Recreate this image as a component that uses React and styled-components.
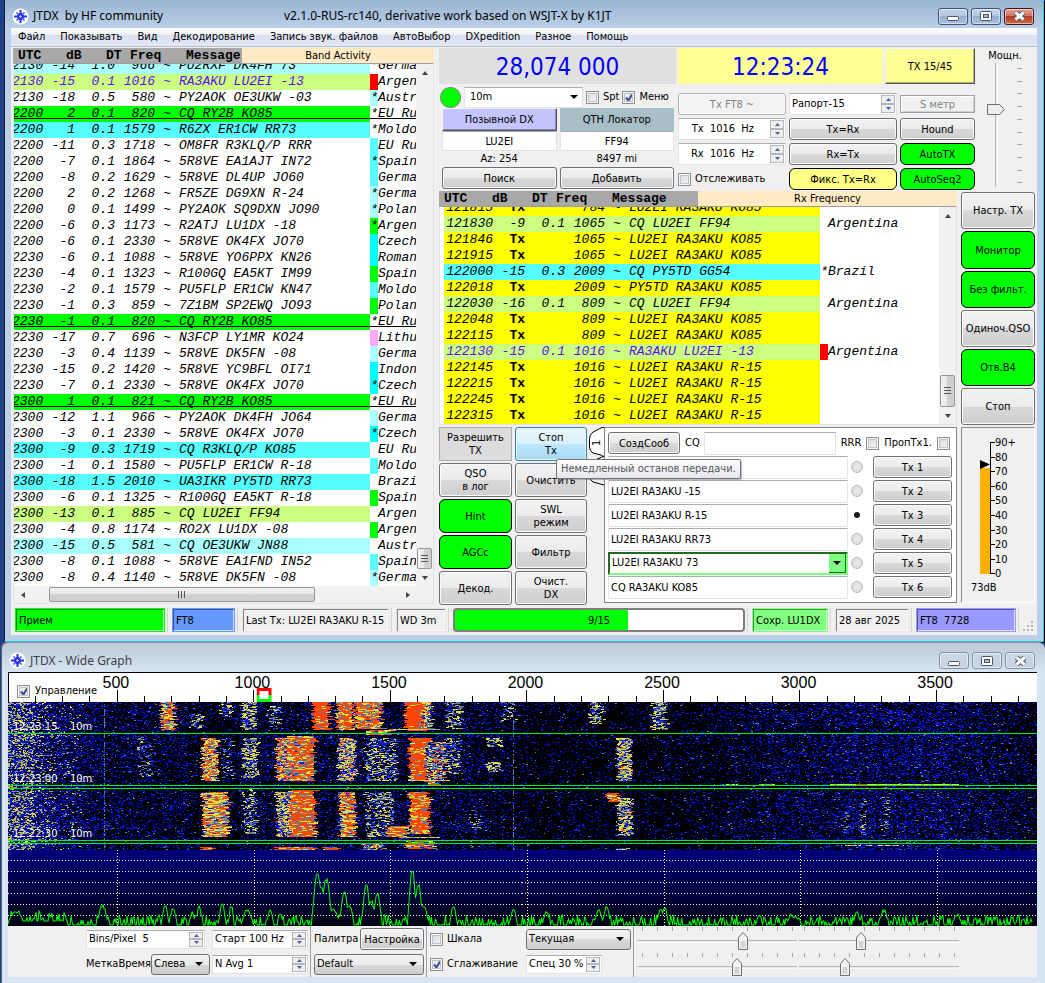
import React from 'react'
import styled, { createGlobalStyle, css } from 'styled-components'

const ui = '"DejaVu Sans Condensed", "Noto Sans", sans-serif';
const mono = '"Liberation Mono", monospace';

const GlobalStyle = createGlobalStyle`
    * { box-sizing:border-box; }
    body {
        margin:0;
        background:#1f3f86;
        font-family:${ui};
        font-size:11px;
        line-height:14px;
        color:#000;
    }
    button, input, select {
        font:inherit;
        color:inherit;
        margin:0;
    }
`;

const svgUrl = (body, w, h) =>
    `url("data:image/svg+xml,${encodeURIComponent(`<svg xmlns='http://www.w3.org/2000/svg' width='${w}' height='${h}'>${body}</svg>`)}")`;

const checkMark = svgUrl("<path d='M2 4.5 L4.5 7.5 L8 1.5' fill='none' stroke='#3b4f8f' stroke-width='2'/>", 10, 9);
const dropArrow = svgUrl("<path d='M0 0h8l-4 4z' fill='#000'/>", 8, 4);
const thumbUp = svgUrl("<path d='M.5 5.5L5 .5L9.5 5.5V17.5H.5z' fill='#f4f4f4' stroke='#6e6e6e'/><path d='M2.5 9h5v7h-5z' fill='#d4d4d4'/>", 10, 18);
const thumbRight = svgUrl("<path d='M.5 .5H12.5L17.5 5.5L12.5 10.5H.5z' fill='#ececec' stroke='#6e6e6e'/>", 18, 11);

/* ---------- windows ---------- */

const Desktop = styled.div`
    background:#1f3f86;
    min-height:100vh;
`;

const MainWindow = styled.section`
    margin-left:4px;
    padding:0 6px 6px 6px;
    border-left:1px solid #111a2c;
    border-right:1px solid #2cc4e8;
    border-bottom:1px solid #2cc4e8;
    background:linear-gradient(#9ab4d1, #bbd0e8 28px, #bbd0e8);
    box-shadow:1px 1px 0 #000;
    margin-right:1px;
`;

const GraphWindow = styled.section`
    margin:1px 0 0 1px;
    padding:0 8px 6px 6px;
    border-left:1px solid #5b6672;
    border-radius:6px 6px 0 0;
    background:linear-gradient(#bccad8, #d7e4f2 29px, #d7e4f2);
    box-shadow:0 -1px 0 #8b949d;
`;

const TitleBar = styled.header`
    display:flex;
    align-items:center;
    height:${p => p.$tall ? '29px' : '28px'};
    padding:${p => p.$tall ? '6px 2px 0 1px' : '4px 3px 0 1px'};
    font-family:"Noto Sans", sans-serif;
    font-size:12px;
    color:${p => p.$dim ? '#3c3f44' : '#000'};
    white-space:pre;
`;

const AppTitle = styled.h1`
    margin:0 0 0 4px;
    font-size:12px;
    font-weight:normal;
    width:${p => p.$wide ? '251px' : 'auto'};
`;

const CaptionButtons = styled.div`
    display:flex;
    gap:3px;
    margin-left:auto;
`;

const CaptionButton = styled.button`
    display:flex;
    align-items:center;
    justify-content:center;
    width:30px;
    height:17px;
    padding:0;
    border:1px solid ${p => p.$close ? '#43161c' : p.$dim ? '#8191a8' : '#3f5474'};
    border-radius:3px;
    box-shadow:inset 0 0 0 1px rgba(255,255,255,0.5);
    background:${p => p.$close
        ? 'linear-gradient(#e3a597, #cf7260 50%, #b23a22 50%, #cf6d50)'
        : p.$dim
            ? 'linear-gradient(#cbd8e6, #c3d1e1)'
            : 'linear-gradient(#c5d5e8, #b0c5de 50%, #94afd0 50%, #a9c0dd)'};
`;

const MenuBar = styled.nav`
    display:flex;
    align-items:center;
    gap:15px;
    height:19px;
    padding:0 7px;
    border-bottom:1px solid #b8bccb;
    background:linear-gradient(#fff, #eef1f9 7px, #d9e0f1 7px, #e3e8f6);
`;

const MenuItem = styled.a`
    color:#000;
    text-decoration:none;
    white-space:nowrap;
`;

const Client = styled.main`
    background:#f0f0f0;
    padding:1px 2px 0 2px;
`;

const Columns = styled.div`
    display:flex;
    gap:5px;
`;

/* ---------- controls ---------- */

const Button = styled.button`
    display:flex;
    align-items:center;
    justify-content:center;
    min-width:0;
    height:${p => p.$h || 22}px;
    width:${p => p.$w ? p.$w + 'px' : '100%'};
    flex:none;
    padding:0;
    line-height:13px;
    white-space:pre-line;
    border:1px solid #707070;
    border-radius:3px;
    box-shadow:inset 0 0 0 1px #fafafa;
    background:linear-gradient(#f2f2f2, #ebebeb 50%, #d9d9d9 50%, #cecece);
    ${p => p.$tone && css`
        border:1px solid #000;
        border-radius:6px;
        box-shadow:none;
        background:${p.$tone};
    `}
    ${p => p.$hot && css`
        border-color:#3c7fb1;
        box-shadow:inset 0 0 0 1px #e8f6fd;
        background:linear-gradient(#eaf6fd, #d9f0fc 50%, #bee6fd 50%, #a7d9f5);
    `}
    ${p => p.$flat && css`
        border:1px solid #adadad;
        border-radius:0;
        box-shadow:none;
        background:#dcdcdc;
    `}
    ${p => p.$bevel && css`
        border:1px solid;
        border-color:#f4f4ff #55555f #55555f #f4f4ff;
        border-radius:0;
        box-shadow:inset -1px -1px 0 rgba(0,0,0,0.3);
        background:${p.$bevel};
    `}
    ${p => p.$plain && css`
        border:0;
        border-radius:0;
        box-shadow:none;
        background:${p.$plain};
    `}
    &:disabled {
        color:#838383;
        border-color:#b0b4b4;
        background:#f2f2f2;
    }
`;

const fieldFrame = css`
    border:1px solid #e2e3ea;
    border-top:1px solid #abadb3;
    background-color:#fff;
`;

const TextField = styled.input`
    ${fieldFrame}
    width:${p => p.$w ? p.$w + 'px' : '100%'};
    min-width:0;
    height:${p => p.$h || 19}px;
    padding:0 2px;
    text-align:${p => p.$center ? 'center' : 'left'};
`;

const SpinFrame = styled.div`
    ${fieldFrame}
    display:flex;
    width:${p => p.$w ? p.$w + 'px' : '100%'};
    height:${p => p.$h || 22}px;
    padding:1px;
    input {
        flex:1;
        min-width:0;
        border:0;
        padding:0 1px;
        background:none;
        text-align:${p => p.$right ? 'right' : 'left'};
        padding-right:${p => p.$right ? '16px' : '1px'};
        white-space:pre;
    }
`;

const SpinButtons = styled.div`
    display:flex;
    flex-direction:column;
    width:14px;
    flex:none;
`;

const SpinButton = styled.button`
    flex:1;
    display:flex;
    align-items:center;
    justify-content:center;
    min-height:0;
    padding:0;
    border:1px solid #b4b6bb;
    background:#efefef;
`;

const Choice = styled.label`
    display:flex;
    align-items:center;
    gap:${p => p.$gap || 4}px;
    white-space:nowrap;
`;

const CheckBox = styled.input.attrs({ type: 'checkbox' })`
    appearance:none;
    flex:none;
    width:13px;
    height:13px;
    border:1px solid #8e8f8f;
    box-shadow:inset 0 0 0 1px #f4f4f4, inset 0 0 0 2px #c0c4c8;
    background:linear-gradient(135deg, #d5d8db, #f6f6f6);
    &:checked {
        background:${checkMark} center no-repeat, #e9ebee;
    }
`;

const Radio = styled.input.attrs({ type: 'radio' })`
    appearance:none;
    flex:none;
    width:12px;
    height:12px;
    border:1px solid #bcbcbc;
    border-radius:50%;
    background:radial-gradient(#ececec, #d8d8d8);
    &:checked {
        border:3px solid transparent;
        background:#1c1c1c padding-box;
    }
`;

const Select = styled.select`
    appearance:none;
    width:${p => p.$w ? p.$w + 'px' : '100%'};
    min-width:0;
    height:${p => p.$h || 21}px;
    padding:0 2px;
    border:1px solid #707070;
    border-radius:3px;
    background:${dropArrow} right 6px center no-repeat,
        linear-gradient(#f2f2f2, #ebebeb 50%, #d9d9d9 50%, #cecece);
    ${p => p.$plain && css`
        ${fieldFrame}
        border-radius:0;
        padding:0 5px;
        background:${dropArrow} right 4px center no-repeat, #fff;
    `}
    ${p => p.$green && css`
        border:2px solid #7fff7f;
        border-top-color:#226b22;
        border-left-color:#226b22;
        border-radius:0;
        background:${dropArrow} right 5px center no-repeat,
            linear-gradient(#226b22, #226b22) right top / 1px 100% no-repeat,
            linear-gradient(#226b22, #226b22) right bottom / 17px 1px no-repeat,
            linear-gradient(#7fff7f, #7fff7f) right center / 17px 100% no-repeat, #fff;
    `}
`;

const RangeAcross = styled.input.attrs({ type: 'range' })`
    appearance:none;
    display:block;
    width:100%;
    height:18px;
    background:linear-gradient(#b4b4b4, #b4b4b4 1px, #e7eaea 1px, #fff) left 8px / 100% 3px no-repeat;
    &::-webkit-slider-thumb {
        appearance:none;
        width:10px;
        height:18px;
        background:${thumbUp} no-repeat;
    }
`;

const RangeDown = styled.input.attrs({ type: 'range' })`
    appearance:none;
    writing-mode:vertical-lr;
    direction:rtl;
    width:18px;
    height:124px;
    background:linear-gradient(90deg, #b4b4b4, #b4b4b4 1px, #e7eaea 1px, #fff) 8px top / 3px 100% no-repeat;
    &::-webkit-slider-thumb {
        appearance:none;
        width:18px;
        height:11px;
        background:${thumbRight} no-repeat;
    }
`;

function SpinBox({ label, value, w, h, right }) {
    return (
        <SpinFrame $w={w} $h={h} $right={right}>
            <input aria-label={label} defaultValue={value} />
            <SpinButtons>
                <SpinButton aria-label={label + ' +'}>
                    <svg width="5" height="3"><path d="M0 3h5L2.5 0z" fill="#4a5f9c" /></svg>
                </SpinButton>
                <SpinButton aria-label={label + ' -'}>
                    <svg width="5" height="3"><path d="M0 0h5L2.5 3z" fill="#4a5f9c" /></svg>
                </SpinButton>
            </SpinButtons>
        </SpinFrame>
    )
}

/* ---------- decode lists ---------- */

const ListHeader = styled.div`
    display:flex;
    height:15px;
    background:#ffebc3;
`;

const ListCaption = styled.div`
    display:grid;
    grid-template-columns:48px 40px 24px 56px auto;
    align-content:center;
    width:${p => p.$w}px;
    padding-left:5px;
    background:#a8a8a8;
    font-family:${mono};
    font-size:13px;
    font-weight:bold;
    line-height:15px;
`;

const ListTitle = styled.div`
    flex:1;
    text-align:center;
    line-height:16px;
`;

const ListFrame = styled.div`
    display:grid;
    grid-template-columns:minmax(0, 1fr) 17px;
    border:1px solid #e0e3e8;
    border-top-color:#9a9da4;
    background:#fff;
`;

const Viewport = styled.div`
    display:flex;
    flex-direction:column;
    justify-content:flex-end;
    overflow:hidden;
    height:${p => p.$h}px;
    padding-left:${p => p.$pad || 0}px;
`;

const DecodeTable = styled.table`
    flex:none;
    table-layout:fixed;
    width:100%;
    min-width:${p => p.$cut ? 'calc(100% + 2px)' : '100%'};
    margin-left:${p => p.$cut ? '-2px' : '0'};
    border-spacing:0;
    font-family:${mono};
    font-size:13px;
    font-style:italic;
    line-height:16px;
`;

const DecodeRow = styled.tr`
    position:relative;
    height:16px;
    color:${p => p.$mine ? '#5a0ef0' : '#000'};
    ${p => p.$line && css`
        &::after {
            content:'';
            position:absolute;
            left:0;
            right:0;
            bottom:3px;
            height:1px;
            background:#000;
        }
    `}
`;

const Cell = styled.td`
    padding:0;
    text-align:${p => p.$align || 'right'};
    font-style:${p => p.$upright ? 'normal' : 'italic'};
    font-weight:${p => p.$upright ? 'bold' : 'normal'};
    background:${p => p.$bg || 'transparent'};
    white-space:nowrap;
    color:${p => p.$black ? '#000' : 'inherit'};
`;

const VScroll = styled.div`
    display:flex;
    flex-direction:column;
    align-items:center;
    background:#f1f1f1;
`;

const HScroll = styled.div`
    display:flex;
    align-items:center;
    height:17px;
    background:#f1f1f1;
`;

const ScrollCorner = styled.div`
    background:#f1f1f1;
`;

const ScrollArrow = styled.button`
    display:flex;
    align-items:center;
    justify-content:center;
    flex:none;
    width:17px;
    height:17px;
    padding:0;
    border:0;
    background:none;
`;

const ScrollGap = styled.div`
    flex:${p => p.$n};
`;

const ScrollThumb = styled.div`
    display:flex;
    align-items:center;
    justify-content:center;
    flex:none;
    width:${p => p.$across ? '266px' : '15px'};
    height:${p => p.$across ? '15px' : (p.$h || 21) + 'px'};
    border:1px solid #979797;
    border-radius:2px;
    background:linear-gradient(${p => p.$across ? '180deg' : '90deg'}, #f3f3f3, #e6e6e6 50%, #d2d2d2 50%, #cdcdcd);
`;

const C1 = '#aaffff', C2 = '#55ffff', C3 = '#00ffff', GR = '#00ff00', LM = '#ccff7f', YE = '#ffff00';

// utc, dB, dt, freq, message, row colour, flag colour, flag, country, style
const bandRows = [
    ['2130', '-14', '1.0', '966', 'PU2RXF DK4FH 73', C1, '', '*', 'Germa'],
    ['2130', '-15', '0.1', '1016', 'RA3AKU LU2EI -13', LM, '#ff0000', '', 'Argen', 'mine'],
    ['2130', '-18', '0.5', '580', 'PY2AOK OE3UKW -03', '', C1, '*', 'Austr'],
    ['2200', '2', '0.1', '820', 'CQ RY2B KO85', GR, '', '*', 'EU Ru', 'line'],
    ['2200', '1', '0.1', '1579', 'R6ZX ER1CW RR73', C2, '', '*', 'Moldo'],
    ['2200', '-11', '0.3', '1718', 'OM8FR R3KLQ/P RRR', '', C2, '', 'EU Ru'],
    ['2200', '-7', '0.1', '1864', '5R8VE EA1AJT IN72', '', C2, '*', 'Spain'],
    ['2200', '-8', '0.2', '1629', '5R8VE DL4UP JO60', '', C2, '', 'Germa'],
    ['2200', '2', '0.2', '1268', 'FR5ZE DG9XN R-24', '', C1, '*', 'Germa'],
    ['2200', '0', '0.1', '1499', 'PY2AOK SQ9DXN JO90', '', C1, '*', 'Polan'],
    ['2200', '-6', '0.3', '1173', 'R2ATJ LU1DX -18', '', GR, '*', 'Argen'],
    ['2200', '-6', '0.1', '2330', '5R8VE OK4FX JO70', '', C3, '', 'Czech'],
    ['2230', '-6', '0.1', '1088', '5R8VE YO6PPX KN26', '', C3, '', 'Roman'],
    ['2230', '-4', '0.1', '1323', 'R100GQ EA5KT IM99', '', GR, '', 'Spain'],
    ['2230', '-2', '0.1', '1579', 'PU5FLP ER1CW KN47', '', C2, '', 'Moldo'],
    ['2230', '-1', '0.3', '859', '7Z1BM SP2EWQ JO93', '', GR, '', 'Polan'],
    ['2230', '-1', '0.1', '820', 'CQ RY2B KO85', GR, '', '*', 'EU Ru', 'line'],
    ['2230', '-17', '0.7', '696', 'N3FCP LY1MR KO24', '', '#ffaaff', '', 'Lithu'],
    ['2230', '-3', '0.4', '1139', '5R8VE DK5FN -08', '', C1, '', 'Germa'],
    ['2230', '-15', '0.2', '1420', '5R8VE YC9BFL OI71', '', C3, '', 'Indon'],
    ['2230', '-7', '0.1', '2330', '5R8VE OK4FX JO70', '', C3, '*', 'Czech'],
    ['2300', '1', '0.1', '821', 'CQ RY2B KO85', GR, '', '*', 'EU Ru', 'line'],
    ['2300', '-12', '1.1', '966', 'PY2AOK DK4FH JO64', '', C1, '', 'Germa'],
    ['2300', '-3', '0.1', '2330', '5R8VE OK4FX JO70', '', C3, '*', 'Czech'],
    ['2300', '-9', '0.3', '1719', 'CQ R3KLQ/P KO85', C2, '', '', 'EU Ru'],
    ['2300', '-1', '0.1', '1580', 'PU5FLP ER1CW R-18', '', C2, '', 'Moldo'],
    ['2300', '-18', '1.5', '2010', 'UA3IKR PY5TD RR73', C2, '', '', 'Brazi'],
    ['2300', '-6', '0.1', '1325', 'R100GQ EA5KT R-18', '', GR, '', 'Spain'],
    ['2300', '-13', '0.1', '885', 'CQ LU2EI FF94', LM, '', '', 'Argen'],
    ['2300', '-4', '0.8', '1174', 'RO2X LU1DX -08', '', GR, '', 'Argen'],
    ['2300', '-15', '0.5', '581', 'CQ OE3UKW JN88', C1, '', '', 'Austr'],
    ['2300', '-8', '0.1', '1088', '5R8VE EA1FND IN52', '', C2, '', 'Spain'],
    ['2300', '-8', '0.4', '1140', '5R8VE DK5FN -08', '', C1, '*', 'Germa'],
];

const rxRows = [
    ['121815', 'Tx', '', '784', 'LU2EI RA3AKU KO85', YE, '', '', ''],
    ['121830', '-9', '0.1', '1065', 'CQ LU2EI FF94', LM, '', '', 'Argentina'],
    ['121846', 'Tx', '', '1065', 'LU2EI RA3AKU KO85', YE, '', '', ''],
    ['121915', 'Tx', '', '1065', 'LU2EI RA3AKU KO85', YE, '', '', ''],
    ['122000', '-15', '0.3', '2009', 'CQ PY5TD GG54', C2, '', '*', 'Brazil'],
    ['122018', 'Tx', '', '2009', 'PY5TD RA3AKU KO85', YE, '', '', ''],
    ['122030', '-16', '0.1', '809', 'CQ LU2EI FF94', LM, '', '', 'Argentina'],
    ['122048', 'Tx', '', '809', 'LU2EI RA3AKU KO85', YE, '', '', ''],
    ['122115', 'Tx', '', '809', 'LU2EI RA3AKU KO85', YE, '', '', ''],
    ['122130', '-15', '0.1', '1016', 'RA3AKU LU2EI -13', LM, '#ff0000', '', 'Argentina', 'mine'],
    ['122145', 'Tx', '', '1016', 'LU2EI RA3AKU R-15', YE, '', '', ''],
    ['122215', 'Tx', '', '1016', 'LU2EI RA3AKU R-15', YE, '', '', ''],
    ['122245', 'Tx', '', '1016', 'LU2EI RA3AKU R-15', YE, '', '', ''],
    ['122315', 'Tx', '', '1016', 'LU2EI RA3AKU R-15', YE, '', '', ''],
];

function Decodes({ rows, utcWidth, cut }) {
    return (
        <DecodeTable $cut={cut}>
            <colgroup>
                {[utcWidth, 32, 40, 40, 24, 191, 8].map((w, i) => <col key={i} width={w} />)}
                <col />
            </colgroup>
            <tbody>
                {rows.map(([utc, db, dt, freq, msg, bg, flagBg, flag, country, kind], i) => (
                    <DecodeRow key={i} $mine={kind === 'mine'} $line={kind === 'line'}>
                        <Cell $bg={bg}>{utc}</Cell>
                        <Cell $bg={bg} $upright={db === 'Tx'}>{db}</Cell>
                        <Cell $bg={bg}>{dt}</Cell>
                        <Cell $bg={bg}>{freq}</Cell>
                        <Cell $bg={bg} $align="center">~</Cell>
                        <Cell $bg={bg} $align="left">{msg}</Cell>
                        <Cell $bg={flagBg} $black>{flag}</Cell>
                        <Cell $align="left" $black>{country}</Cell>
                    </DecodeRow>
                ))}
            </tbody>
        </DecodeTable>
    )
}

function Arrow({ d, label }) {
    return (
        <ScrollArrow aria-label={label}>
            <svg width="8" height="8"><path d={d} fill="#444" /></svg>
        </ScrollArrow>
    )
}

function VBar({ thumb }) {
    return (
        <VScroll>
            <Arrow label="up" d="M1 6h6L4 2z" />
            <ScrollGap $n={1} />
            <ScrollThumb $h={thumb}>
                <svg width="7" height="8"><path d="M0 .5h7M0 3.5h7M0 6.5h7" stroke="#555" /></svg>
            </ScrollThumb>
            <Arrow label="down" d="M1 2h6L4 6z" />
        </VScroll>
    )
}

const Caption = ({ w }) => (
    <ListCaption $w={w}>
        <span>UTC</span><span>dB</span><span>DT</span><span>Freq</span><span>Message</span>
    </ListCaption>
);

const BandPanel = styled.section`
    flex:0 1 421px;
    min-width:0;
`;

/* ---------- upper right ---------- */

const RightSide = styled.div`
    flex:1;
    min-width:0;
`;

const TopArea = styled.div`
    display:flex;
    justify-content:space-between;
    height:143px;
`;

const RadioArea = styled.div`
    flex:0 1 536px;
    min-width:0;
`;

const Displays = styled.div`
    display:grid;
    grid-template-columns:237px 1fr 90px;
    gap:2px;
    height:36px;
`;

const BigNumber = styled.output`
    display:flex;
    align-items:center;
    justify-content:center;
    background:${p => p.$bg};
    color:#0000ff;
    font-size:24px;
    line-height:32px;
    padding-top:2px;
`;

const Panels = styled.div`
    display:flex;
    gap:2px;
`;

const CallPanel = styled.div`
    flex:0 0 237px;
    padding:2px 2px 0 1px;
`;

const BandRow = styled.div`
    display:flex;
    align-items:center;
    gap:3px;
    height:22px;
`;

const Lamp = styled.span`
    flex:none;
    width:21px;
    height:21px;
    border:1px solid #7d8b7d;
    border-radius:10px;
    background:#00ff00;
`;

const CallGrid = styled.div`
    display:grid;
    grid-template-columns:1fr 1fr;
    column-gap:3px;
    padding-left:2px;
`;

const Readout = styled.div`
    height:16px;
    line-height:16px;
    text-align:center;
`;

const ControlGrid = styled.div`
    flex:1;
    display:grid;
    grid-template-columns:108px 108px 1fr;
    gap:3px;
    padding-top:9px;
    align-content:start;
    align-items:center;
`;

const Meter = styled.div`
    height:18px;
    border:1px solid #a0a0a0;
    box-shadow:inset 1px 1px 0 #fff, inset -1px -1px 0 #d0d0d0;
    line-height:17px;
    text-align:center;
    color:#838383;
`;

const PowerPanel = styled.div`
    width:60px;
    text-align:center;
    padding-top:1px;
`;

const PowerSlider = styled.div`
    display:flex;
    justify-content:center;
    gap:12px;
`;

/* ---------- lower right ---------- */

const WorkArea = styled.div`
    display:flex;
    gap:4px;
`;

const WorkLeft = styled.div`
    flex:1;
    min-width:0;
`;

const WorkSide = styled.div`
    display:flex;
    flex-direction:column;
    flex:0 0 74px;
    gap:2px;
    padding-top:1px;
`;

const LevelBox = styled.div`
    width:74px;
    height:176px;
    border:1px solid #8a8a90;
    border-right-color:#fff;
    border-bottom-color:#fff;
`;

const LowerRow = styled.div`
    display:flex;
    margin-top:2px;
    gap:2px;
`;

const CommandGrid = styled.div`
    position:relative;
    display:grid;
    grid-template-columns:73px 72px;
    gap:2px 3px;
    flex:none;
`;

const Tooltip = styled.div`
    position:absolute;
    z-index:2;
    left:117px;
    top:32px;
    padding:1px 4px;
    border:1px solid #767676;
    border-radius:2px;
    background:linear-gradient(#fff, #e5e5f0);
    box-shadow:1px 1px 1px rgba(0,0,0,0.3);
    color:#575757;
    line-height:16px;
    white-space:nowrap;
`;

const MessageBlock = styled.div`
    display:flex;
    flex:1;
    min-width:0;
`;

const MessagePane = styled.div`
    flex:1;
    min-width:0;
    height:176px;
    border:1px solid #82828a;
    padding:3px 4px 3px 3px;
    background:#fff;
`;

const MessageTop = styled.div`
    display:flex;
    align-items:center;
    gap:5px;
    height:24px;
`;

const MessageRow = styled.div`
    display:flex;
    align-items:center;
    gap:3px;
    height:24px;
    button { margin-left:7px; }
`;

/* ---------- status bar ---------- */

const StatusBar = styled.footer`
    display:flex;
    gap:4px;
    padding:3px 2px;
    height:30px;
`;

const StatusCell = styled.div`
    flex:${p => p.$grow ? '1 1 292px' : `0 0 ${p.$w}px`};
    padding-right:2px;
    border-right:1px solid #d5d5d5;
`;

const StatusText = styled.div`
    height:24px;
    padding:0 3px;
    border:1px solid ${p => p.$bg || '#e4e4e4'};
    box-shadow:inset 1px 1px 0 rgba(0,0,0,0.45), inset -1px -1px 0 rgba(255,255,255,0.7);
    background:${p => p.$bg || '#f0f0f0'};
    line-height:23px;
    white-space:pre;
`;

const Progress = styled.div`
    height:24px;
    border:2px solid #7f7f7f;
    border-radius:4px;
    background:linear-gradient(90deg, #00ff00 60%, #fff 60%);
    line-height:21px;
    text-align:center;
`;

/* ---------- wide graph ---------- */

const GraphBody = styled.div`
    border-top:1px solid #000;
    background:#f0f0f0;
`;

const Ruler = styled.div`
    position:relative;
    height:29px;
    background:#fff;
    box-shadow:inset 1px 0 0 #000;
    svg { display:block; width:100%; height:29px; font-family:"Liberation Sans", sans-serif; font-size:16px; }
`;

const RulerCheck = styled.div`
    position:absolute;
    left:9px;
    top:11px;
`;

const Waterfall = styled.div`
    position:relative;
    height:148px;
    background:#000;
    svg { display:block; width:100%; height:148px; }
`;

const TimeMark = styled.span`
    position:absolute;
    left:5px;
    top:${p => p.$top}px;
    color:#fff;
    white-space:pre;
`;

const Spectrum = styled.div`
    height:76px;
    background:linear-gradient(#00007c, #000010);
    svg { display:block; width:100%; height:76px; }
`;

const GraphControls = styled.div`
    display:flex;
    align-items:center;
    height:51px;
    padding-left:78px;
`;

const ControlColumn = styled.div`
    display:flex;
    flex-direction:column;
    justify-content:space-between;
    flex:none;
    width:${p => p.$w}px;
    height:51px;
    margin-right:2px;
    padding:2px 0;
    padding-left:${p => p.$rule ? 3 : 0}px;
    border-left:${p => p.$rule ? '1px solid #a0a0a0' : '0'};
`;

const Line = styled.div`
    display:flex;
    align-items:center;
    justify-content:space-between;
    height:22px;
    white-space:nowrap;
`;

const SliderGrid = styled.div`
    display:grid;
    grid-template-columns:160px 160px;
    gap:3px 2px;
    padding-left:3px;
    border-left:1px solid #a0a0a0;
    height:50px;
    align-content:center;
    svg { display:block; }
`;

const px = f => (f - 100) * 0.2728;

// small seeded generator, so the noise stays the same on every load
function seeded(seed) {
    let s = seed;
    return () => {
        s = (s * 1664525 + 1013904223) % 4294967296;
        return s / 4294967296;
    }
}

// x0, x1, y0, y1, yellow share, red share
const signals = [
    [153, 166, 0, 28, 0.4, 0.35], [183, 196, 12, 26, 0.25, 0], [213, 224, 0, 15, 0.35, 0],
    [234, 248, 0, 28, 0.4, 0.01], [260, 272, 4, 27, 0.2, 0], [305, 321, 0, 28, 0.1, 0.85],
    [329, 344, 0, 28, 0.35, 0.5], [347, 373, 0, 27, 0.35, 0.45], [397, 414, 0, 29, 0.05, 0.9],
    [414, 424, 0, 27, 0.5, 0.08], [438, 454, 0, 27, 0.25, 0], [493, 507, 0, 20, 0.12, 0],
    [581, 593, 0, 22, 0.35, 0], [643, 657, 0, 28, 0.4, 0], [358, 382, 28, 33, 0.3, 0.4],
    [194, 209, 36, 79, 0.5, 0.3], [214, 224, 36, 78, 0.06, 0], [235, 249, 36, 76, 0.42, 0],
    [268, 283, 36, 79, 0.42, 0.3], [280, 305, 34, 79, 0.3, 0.52], [330, 347, 36, 79, 0.45, 0.12],
    [357, 388, 36, 79, 0.25, 0], [401, 422, 36, 79, 0.12, 0.8], [416, 437, 40, 79, 0.34, 0.12],
    [437, 452, 36, 72, 0.22, 0], [478, 493, 36, 45, 0.35, 0], [478, 493, 60, 70, 0.35, 0],
    [608, 622, 36, 79, 0.5, 0.06], [130, 145, 36, 75, 0.05, 0], [418, 430, 78, 84, 0.2, 0.5],
    [194, 219, 90, 135, 0.45, 0.33], [235, 248, 87, 132, 0.25, 0], [268, 282, 90, 135, 0.45, 0.06],
    [281, 306, 88, 135, 0.22, 0.65], [331, 346, 90, 135, 0.42, 0.35], [357, 384, 90, 135, 0.28, 0],
    [378, 398, 124, 135, 0.35, 0.5], [401, 420, 90, 132, 0.3, 0.6], [598, 610, 91, 100, 0.2, 0.7],
    [608, 622, 96, 134, 0.42, 0.05], [460, 474, 108, 128, 0.05, 0], [850, 856, 95, 134, 0.06, 0],
    [873, 879, 95, 134, 0.08, 0], [834, 840, 110, 134, 0.05, 0],
    [194, 206, 145, 148, 0.3, 0.4], [268, 308, 145, 148, 0.2, 0.6], [316, 330, 145, 148, 0.3, 0.5],
    [398, 425, 139, 147, 0.3, 0.4], [355, 376, 141, 148, 0.3, 0.2], [609, 620, 146, 148, 0.7, 0],
    [380, 430, 27, 28, 0.9, 0.05], [390, 430, 135, 136, 0.8, 0.1], [398, 438, 78, 79, 0.8, 0.1],
    [820, 948, 82, 83, 1, 0], [710, 728, 82, 83, 0.7, 0], [750, 766, 82, 83, 0.8, 0],
    [845, 858, 82, 83, 0, 1], [830, 900, 143, 144, 0.4, 0],
];

function noiseLevel(x) {
    if (x < 100) return 0.62 - x * 0.0032;
    if (x < 180) return 0.26;
    if (x < 230) return 0.14;
    if (x < 450) return 0.25;
    if (x < 520) return 0.28 - (x - 450) * 0.0022;
    if (x < 680) return 0.12;
    if (x < 840) return 0.13 + (x - 680) * 0.0015;
    if (x < 930) return 0.4;
    return 0.4 - (x - 930) * 0.0022;
}

function buildWaterfall() {
    const rnd = seeded(77);
    const out = { navy: '', blue: '', steel: '', olive: '', yellow: '', red: '' };
    for (let y = 0; y < 148; y++) {
        const rowGain = 0.7 + rnd() * 0.6;
        const shift = Math.round((rnd() - 0.5) * 5);
        const here = signals.filter(s => y >= s[2] && y < s[3]);
        let x = 0;
        while (x < 1028) {
            const hit = here.filter(s => x >= s[0] + shift && x < s[1] + shift).pop();
            const len = hit ? 1 + Math.floor(rnd() * (hit[5] > 0.3 ? 5 : 3)) : 1 + Math.floor(rnd() * 2);
            const r = rnd();
            let key = null;
            if (hit && r < hit[5]) key = 'red';
            else if (hit && r < hit[5] + hit[4]) key = rnd() < 0.7 ? 'yellow' : 'olive';
            else if (hit) key = r > 0.85 ? 'steel' : r > 0.6 ? 'blue' : null;
            else {
                const n = noiseLevel(x) * rowGain;
                const hot = (x < 26 ? 0.34 : x < 75 ? 0.2 - x * 0.0024 : 0) * rowGain;
                if (r < hot) key = rnd() < 0.3 ? 'yellow' : 'olive';
                else if (r < hot + n * 0.06) key = 'steel';
                else if (r < hot + n * 0.5) key = 'blue';
                else if (r < hot + n * 1.1) key = 'navy';
            }
            if (key) out[key] += `M${x} ${y}.5h${len}`;
            x += len;
        }
        if (rnd() < 0.6) out.steel += `M96 ${y}.5h1`;
        if (rnd() < 0.6) out.steel += `M505 ${y}.5h1`;
    }
    return out;
}

const fall = buildWaterfall();
const fallColors = { navy: '#00008c', blue: '#0a1ed2', steel: '#5a78a8', olive: '#a8a45a', yellow: '#e6dc46', red: '#ff4600' };

// x, height of the spectrum peaks
const peaks = [
    [8, 12, 8], [94, 18, 4], [96, 15, 3], [157, 18, 3], [165, 15, 3], [184, 12, 2], [191, 18, 2], [214, 20, 3],
    [223, 18, 2], [239, 14, 5], [262, 13, 3], [272, 11, 2], [309, 49, 5], [313, 36, 5], [318, 44, 5],
    [325, 15, 5], [336, 31, 4], [341, 18, 4], [358, 38, 4], [363, 22, 4], [369, 29, 4], [404, 52, 4],
    [410, 38, 4], [415, 18, 5], [445, 17, 3], [505, 14, 3], [538, 12, 3], [590, 14, 4], [598, 17, 3],
    [652, 14, 4], [656, 16, 3], [783, 9, 4], [848, 12, 3], [875, 13, 4], [948, 9, 4],
];

function buildSpectrum() {
    const rnd = seeded(2025);
    let d = 'M0 74';
    for (let x = 1; x < 1024; x += 1) {
        const base = x < 60 ? 4 : 0;
        let h = base + Math.max(0, rnd() * 18 - 8);
        for (const [p, top, w] of peaks) {
            const k = 1 - Math.abs(x - p) / (w + 1);
            if (k > 0) h = Math.max(h, top * Math.min(1, k * 1.3) + rnd() * 2);
        }
        d += `L${x} ${Math.round(75 - h)}`;
    }
    return d;
}

const trace = buildSpectrum();

const ruleMarks = Array.from({ length: 37 }, (_, i) => 200 + i * 100);
const majors = [500, 1000, 1500, 2000, 2500, 3000, 3500];
const pct = f => (px(f) / 1028 * 100) + '%';

const levels = ['90+', '80', '70', '60', '50', '40', '30', '20', '10', '0'];

function Logo() {
    return (
        <svg width="17" height="17" viewBox="0 0 17 17">
            <circle cx="8.5" cy="8.5" r="8" fill="#fff" />
            <path d="M8.5 2V15M2 8.5H15" stroke="#2a35e8" strokeWidth="2" />
            <path d="M4.5 4.5L12.5 12.5M12.5 4.5L4.5 12.5" stroke="#3a45f0" strokeWidth="1.5" />
            <path d="M8.5 5V12M5 8.5H12" stroke="#2a35e8" strokeWidth="3" />
            <path d="M8.5 7V10M7 8.5H10" stroke="#b0bcff" />
        </svg>
    )
}

function Captions({ dim }) {
    return (
        <CaptionButtons>
            <CaptionButton $dim={dim} aria-label="Minimize">
                <svg width="12" height="10"><rect x=".5" y="5.5" width="11" height="4" rx="1" fill="#fff" stroke="#4b5565" /></svg>
            </CaptionButton>
            <CaptionButton $dim={dim} aria-label="Maximize">
                <svg width="12" height="10">
                    <rect x=".5" y=".5" width="11" height="9" rx="1" fill="#fff" stroke="#4b5565" />
                    <rect x="3.5" y="3.5" width="5" height="3" fill="#a9bdd8" stroke="#4b5565" />
                </svg>
            </CaptionButton>
            <CaptionButton $dim={dim} $close={!dim} aria-label="Close">
                <svg width="13" height="10">
                    <path d="M2.5 1.5L10.5 8.5M10.5 1.5L2.5 8.5" stroke="#4b5565" strokeWidth="5" />
                    <path d="M2.5 1.5L10.5 8.5M10.5 1.5L2.5 8.5" stroke="#fff" strokeWidth="3" />
                </svg>
            </CaptionButton>
        </CaptionButtons>
    )
}

function SliderTicks() {
    return (
        <svg width="160" height="5">
            {Array.from({ length: 11 }, (_, i) => (
                <rect key={i} x={5 + i * 15} y="0" width="1" height="4" fill="#a8a490" />
            ))}
        </svg>
    )
}

const menu = ['Файл', 'Показывать', 'Вид', 'Декодирование', 'Запись звук. файлов', 'АвтоВыбор', 'DXpedition', 'Разное', 'Помощь'];

const messages = ['', 'LU2EI RA3AKU -15', 'LU2EI RA3AKU R-15', 'LU2EI RA3AKU RR73', 'LU2EI RA3AKU 73', 'CQ RA3AKU KO85'];

const App = () => {
  return (
    <Desktop>
        <GlobalStyle />
        <MainWindow>
            <TitleBar>
                <Logo />
                <AppTitle $wide>JTDX  by HF community</AppTitle>
                <span>v2.1.0-RUS-rc140, derivative work based on WSJT-X by K1JT</span>
                <Captions />
            </TitleBar>
            <MenuBar>
                {menu.map(m => <MenuItem key={m} href="#">{m}</MenuItem>)}
            </MenuBar>
            <Client>
                <Columns>
                    <BandPanel>
                        <ListHeader>
                            <Caption w={229} />
                            <ListTitle>Band Activity</ListTitle>
                        </ListHeader>
                        <ListFrame>
                            <Viewport $h={522}>
                                <Decodes rows={bandRows} utcWidth={31} cut />
                            </Viewport>
                            <VBar thumb={21} />
                            <HScroll>
                                <Arrow label="left" d="M6 1v6L2 4z" />
                                <ScrollGap $n={18} />
                                <ScrollThumb $across>
                                    <svg width="8" height="7"><path d="M.5 0v7M3.5 0v7M6.5 0v7" stroke="#555" /></svg>
                                </ScrollThumb>
                                <ScrollGap $n={84} />
                                <Arrow label="right" d="M2 1v6l4-3z" />
                            </HScroll>
                            <ScrollCorner />
                        </ListFrame>
                    </BandPanel>

                    <RightSide>
                        <TopArea>
                            <RadioArea>
                                <Displays>
                                    <BigNumber $bg="#e0e0e0">28,074 000</BigNumber>
                                    <BigNumber $bg="#ffff96">12:23:24</BigNumber>
                                    <Button $h={36} $bevel="#ffff96">TX 15/45</Button>
                                </Displays>
                                <Panels>
                                    <CallPanel>
                                        <BandRow>
                                            <Lamp />
                                            <Select $plain $w={119} aria-label="Band"><option>10m</option></Select>
                                            <Choice><CheckBox />Spt</Choice>
                                            <Choice><CheckBox defaultChecked />Меню</Choice>
                                        </BandRow>
                                        <CallGrid>
                                            <Button $h={23} $bevel="#c4c4ff">Позывной DX</Button>
                                            <Button $h={23} $plain="#a9bfc8">QTH Локатор</Button>
                                            <TextField $center $h={20} aria-label="Позывной DX" defaultValue="LU2EI" />
                                            <TextField $center $h={20} aria-label="QTH Локатор" defaultValue="FF94" />
                                            <Readout>Az: 254</Readout>
                                            <Readout>8497 mi</Readout>
                                            <Button>Поиск</Button>
                                            <Button>Добавить</Button>
                                        </CallGrid>
                                    </CallPanel>
                                    <ControlGrid>
                                        <Button disabled>Tx FT8 ~</Button>
                                        <SpinBox label="Рапорт" value="Рапорт-15" />
                                        <Meter>S метр</Meter>
                                        <SpinBox label="Tx" value="Tx  1016  Hz" right />
                                        <Button>Tx=Rx</Button>
                                        <Button>Hound</Button>
                                        <SpinBox label="Rx" value="Rx  1016  Hz" right />
                                        <Button>Rx=Tx</Button>
                                        <Button $tone="#00ff00">AutoTX</Button>
                                        <Choice><CheckBox />Отслеживать</Choice>
                                        <Button $tone="#ffff88">Фикс. Tx=Rx</Button>
                                        <Button $tone="#00ff00">AutoSeq2</Button>
                                    </ControlGrid>
                                </Panels>
                            </RadioArea>
                            <PowerPanel>
                                <label htmlFor="power">Мощн.</label>
                                <PowerSlider>
                                    <RangeDown id="power" defaultValue="64" />
                                    <svg width="6" height="124">
                                        {Array.from({ length: 10 }, (_, i) => (
                                            <rect key={i} x="0" y={5 + Math.round(i * 12.7)} width="5" height="1" fill="#a8a490" />
                                        ))}
                                    </svg>
                                </PowerSlider>
                            </PowerPanel>
                        </TopArea>

                        <WorkArea>
                            <WorkLeft>
                                <ListHeader>
                                    <Caption w={259} />
                                    <ListTitle>Rx Frequency</ListTitle>
                                </ListHeader>
                                <ListFrame>
                                    <Viewport $h={217} $pad={4}>
                                        <Decodes rows={rxRows} utcWidth={49} />
                                    </Viewport>
                                    <VBar thumb={32} />
                                </ListFrame>
                                <LowerRow>
                                    <CommandGrid>
                                        <Button $h={34} $flat>{'Разрешить\nTX'}</Button>
                                        <Button $h={34} $hot>{'Стоп\nTx'}</Button>
                                        <Button $h={34}>{'QSO\nв лог'}</Button>
                                        <Button $h={34}>Очистить</Button>
                                        <Button $h={34} $tone="#00ff00">Hint</Button>
                                        <Button $h={34}>{'SWL\nрежим'}</Button>
                                        <Button $h={34} $tone="#00ff00">AGCc</Button>
                                        <Button $h={34}>Фильтр</Button>
                                        <Button $h={34}>Декод.</Button>
                                        <Button $h={34}>{'Очист.\nDX'}</Button>
                                        <Tooltip role="tooltip">Немедленный останов передачи.</Tooltip>
                                    </CommandGrid>
                                    <MessageBlock>
                                        <svg width="15" height="60" fill="none" stroke="#000">
                                            <path d="M15 .5H13L4 5Q.5 8 .5 12V20Q.5 24 4 26L12 28L15 30" fill="#fff" />
                                            <path d="M15 29L4 34Q.5 37 .5 41V49Q.5 53 4 55L15 58" />
                                            <text x="-19" y="11" transform="rotate(-90)" fill="#000" stroke="none">1</text>
                                        </svg>
                                        <MessagePane>
                                            <MessageTop>
                                                <Button $w={72}>СоздСооб</Button>
                                                <Choice $gap={4}>CQ<TextField $w={132} $h={23} /></Choice>
                                                <Choice $gap={5}>RRR<CheckBox /></Choice>
                                                <Choice $gap={5}>ПропTx1.<CheckBox /></Choice>
                                            </MessageTop>
                                            {messages.map((m, i) => (
                                                <MessageRow key={i}>
                                                    {i === 4
                                                        ? <Select $green $h={23} aria-label="Tx 5"><option>{m}</option></Select>
                                                        : <TextField $h={23} aria-label={'Tx ' + (i + 1)} defaultValue={m} />}
                                                    <Radio name="next" aria-label={'Tx ' + (i + 1)} defaultChecked={i === 2} />
                                                    <Button $w={79}>Tx {i + 1}</Button>
                                                </MessageRow>
                                            ))}
                                        </MessagePane>
                                    </MessageBlock>
                                </LowerRow>
                            </WorkLeft>
                            <WorkSide>
                                <Button $h={37}>Настр. TX</Button>
                                <Button $h={38} $tone="#00ff00">Монитор</Button>
                                <Button $h={37} $tone="#00ff00">Без фильт.</Button>
                                <Button $h={37}>Одиноч.QSO</Button>
                                <Button $h={37} $tone="#00ff00">Отв.В4</Button>
                                <Button $h={37}>Стоп</Button>
                                <LevelBox>
                                    <svg width="72" height="174">
                                        <rect x="18" y="40" width="10" height="106" fill="#ffb000" />
                                        <path d="M18 32V41L28 36.5z" fill="#000" />
                                        <path d={'M28.5 14V146' + levels.map((_, i) => `M28 ${14 + Math.round(i * 14.6)}.5h5`).join('')} stroke="#000" />
                                        {levels.map((l, i) => <text key={l} x="33" y={18 + Math.round(i * 14.6)}>{l}</text>)}
                                        <text x="9" y="163">73dB</text>
                                    </svg>
                                </LevelBox>
                            </WorkSide>
                        </WorkArea>
                    </RightSide>
                </Columns>

                <StatusBar>
                    <StatusCell $w={153}><StatusText $bg="#00ff00">Прием</StatusText></StatusCell>
                    <StatusCell $w={66}><StatusText $bg="#6699ff">FT8</StatusText></StatusCell>
                    <StatusCell $w={150}><StatusText>Last Tx: LU2EI RA3AKU R-15</StatusText></StatusCell>
                    <StatusCell $w={53}><StatusText>WD 3m</StatusText></StatusCell>
                    <StatusCell $grow><Progress role="progressbar">9/15</Progress></StatusCell>
                    <StatusCell $w={79}><StatusText $bg="#80ff80">Сохр. LU1DX</StatusText></StatusCell>
                    <StatusCell $w={77}><StatusText>28 авг 2025</StatusText></StatusCell>
                    <StatusCell $w={103}><StatusText $bg="#9999ff">FT8  7728</StatusText></StatusCell>
                    <svg width="10" height="24" fill="#b4b4b4">
                        <path d="M8 13h2v2h-2zM8 17h2v2h-2zM8 21h2v2h-2zM4 17h2v2h-2zM4 21h2v2h-2zM0 21h2v2h-2z" />
                    </svg>
                </StatusBar>
            </Client>
        </MainWindow>

        <GraphWindow>
            <TitleBar $tall $dim>
                <Logo />
                <AppTitle>JTDX - Wide Graph</AppTitle>
                <Captions dim />
            </TitleBar>
            <GraphBody>
                <Ruler>
                    <svg>
                        {ruleMarks.map(f => (
                            <line key={f} x1={pct(f)} x2={pct(f)} y1={f % 500 ? 23 : 17} y2="29" stroke="#000" shapeRendering="crispEdges" />
                        ))}
                        {majors.map(f => <text key={f} x={pct(f - 5)} y="15" textAnchor="middle">{f}</text>)}
                        <svg x={pct(1010)} y="15" width="16" height="14">
                            <path d="M1.5 7V1.5H13.5V7" fill="none" stroke="#ff0000" strokeWidth="3" />
                            <path d="M1.5 7V12.5H13.5V7" fill="none" stroke="#00ff00" strokeWidth="3" />
                        </svg>
                    </svg>
                    <RulerCheck><Choice $gap={5}><CheckBox defaultChecked />Управление</Choice></RulerCheck>
                </Ruler>
                <Waterfall>
                    <svg viewBox="0 0 1028 148" preserveAspectRatio="none" shapeRendering="crispEdges">
                        {Object.keys(fall).map(k => <path key={k} d={fall[k]} stroke={fallColors[k]} />)}
                        <path d="M0 83.5H1028M0 86.5H1028M0 138.5H1028M0 141.5H1028M0 31.5H1028" stroke="#00f000" />
                    </svg>
                    <TimeMark $top={18}>12:23:15    10m</TimeMark>
                    <TimeMark $top={70}>12:23:00    10m</TimeMark>
                    <TimeMark $top={125}>12:22:30    10m</TimeMark>
                </Waterfall>
                <Spectrum>
                    <svg viewBox="0 0 1028 76" preserveAspectRatio="none">
                        <g stroke="#fff" strokeDasharray="1 2" shapeRendering="crispEdges">
                            {[10, 21, 32, 43, 54, 65].map(y => <path key={y} d={`M0 ${y}.5H1028`} />)}
                            {majors.map(f => <path key={f} d={`M${Math.round(px(f))}.5 0V76`} />)}
                        </g>
                        <path d={trace} fill="none" stroke="#00ff00" />
                    </svg>
                </Spectrum>
                <GraphControls>
                    <ControlColumn $w={124}>
                        <Line><SpinBox label="Bins/Pixel" value="Bins/Pixel  5" w={119} h={19} /></Line>
                        <Line>
                            <label htmlFor="stamp">МеткаВремя</label>
                            <Select id="stamp" $w={62}><option>Слева</option></Select>
                        </Line>
                    </ControlColumn>
                    <ControlColumn $w={96}>
                        <Line><SpinBox label="Старт" value="Старт 100 Hz" h={19} /></Line>
                        <Line><SpinBox label="N Avg" value="N Avg 1" h={19} /></Line>
                    </ControlColumn>
                    <ControlColumn $w={114} $rule>
                        <Line>Палитра<Button $w={64}>Настройка</Button></Line>
                        <Line><Select aria-label="Палитра"><option>Default</option></Select></Line>
                    </ControlColumn>
                    <ControlColumn $w={98} $rule>
                        <Line><Choice><CheckBox />Шкала</Choice></Line>
                        <Line><Choice><CheckBox defaultChecked />Сглаживание</Choice></Line>
                    </ControlColumn>
                    <ControlColumn $w={105}>
                        <Line><Select aria-label="Режим"><option>Текущая</option></Select></Line>
                        <Line><SpinBox label="Спец" value="Спец 30 %" w={76} h={19} /></Line>
                    </ControlColumn>
                    <SliderGrid>
                        <div><SliderTicks /><RangeAcross aria-label="Gain" defaultValue="67" /></div>
                        <div><SliderTicks /><RangeAcross aria-label="Spectrum gain" defaultValue="38" /></div>
                        <div><SliderTicks /><RangeAcross aria-label="Zero" defaultValue="63" /></div>
                        <div><SliderTicks /><RangeAcross aria-label="Spectrum zero" defaultValue="27" /></div>
                    </SliderGrid>
                </GraphControls>
            </GraphBody>
        </GraphWindow>
    </Desktop>
  )
}

export default App
